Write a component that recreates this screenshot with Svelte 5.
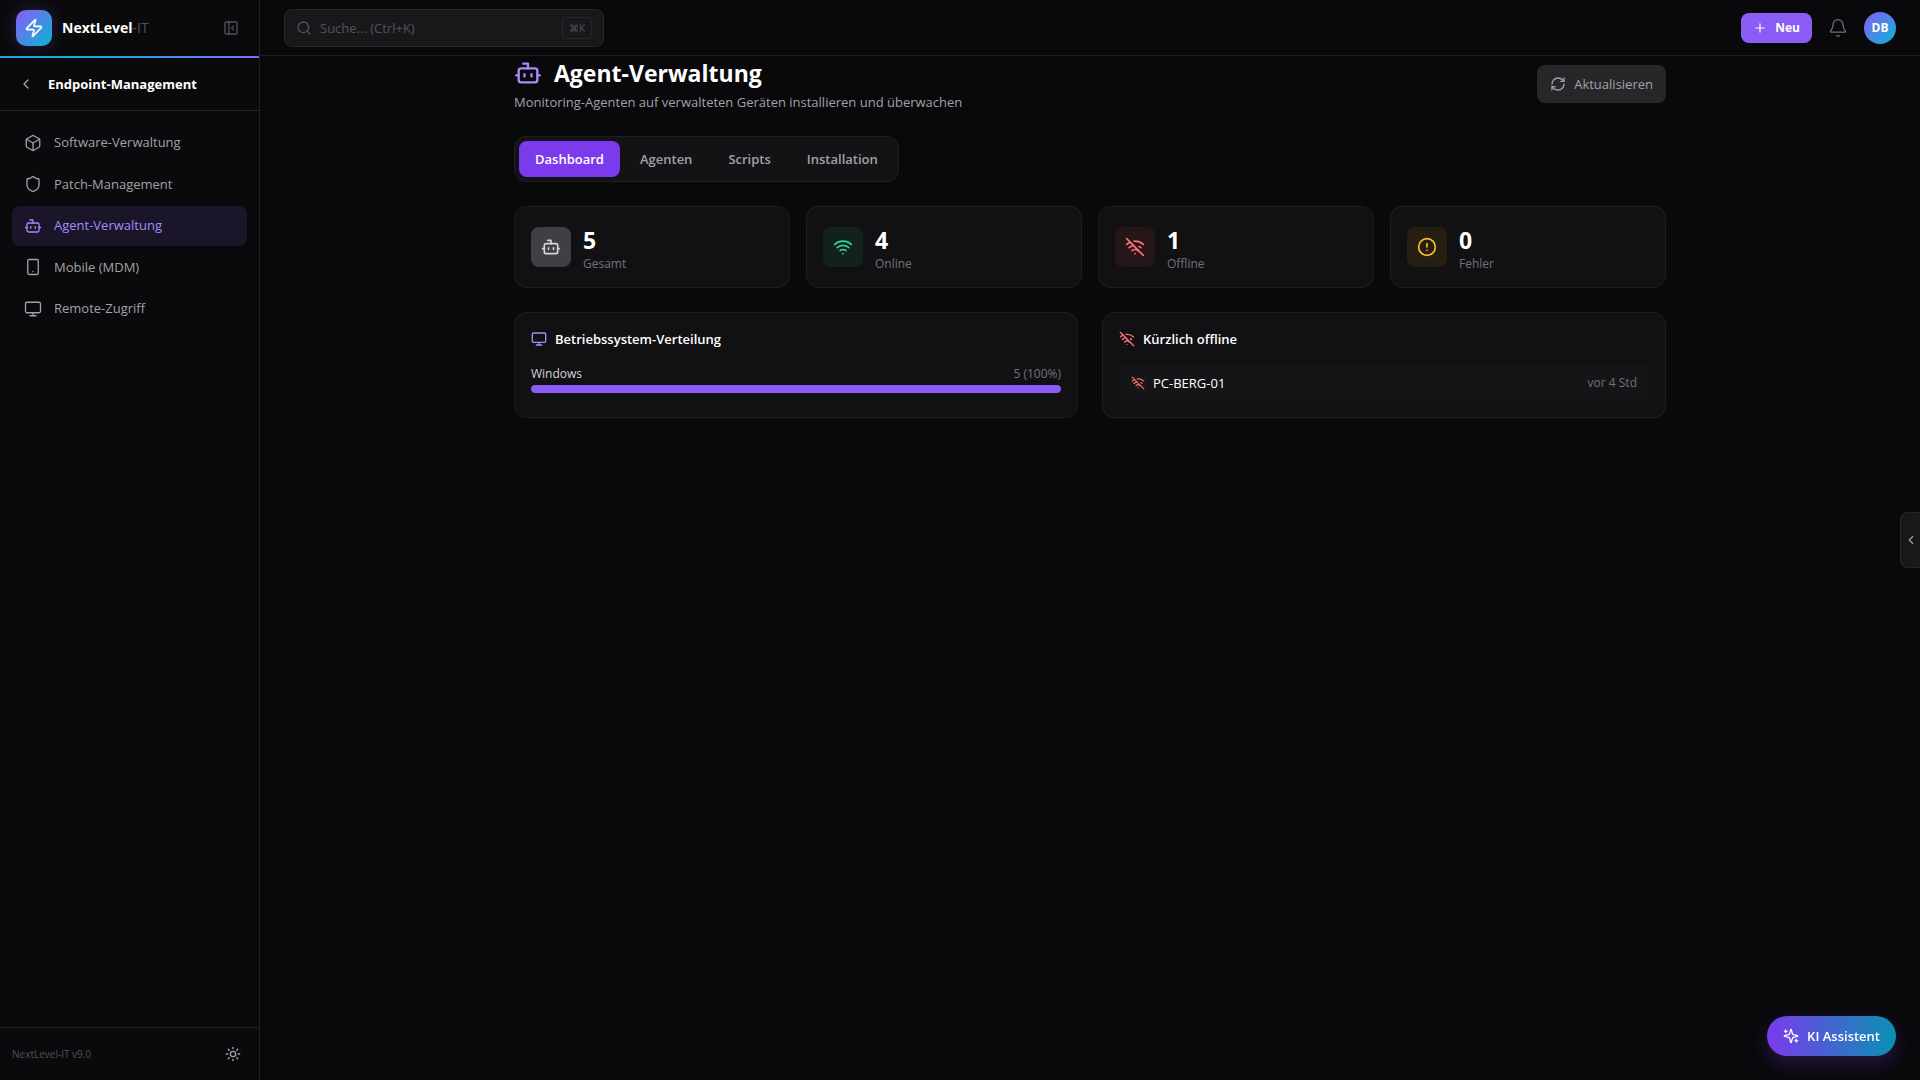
<script lang="ts">
  type IconName = keyof typeof icons;

  const icons = {
    zap: '<path d="M4 14a1 1 0 0 1-.78-1.63l9.9-10.2a.5.5 0 0 1 .86.46l-1.92 6.02A1 1 0 0 0 13 10h7a1 1 0 0 1 .78 1.63l-9.9 10.2a.5.5 0 0 1-.86-.46l1.92-6.02A1 1 0 0 0 11 14z"/>',
    panel: '<rect width="18" height="18" x="3" y="3" rx="2"/><path d="M9 3v18"/><path d="m16 15-3-3 3-3"/>',
    chevron: '<path d="m15 18-6-6 6-6"/>',
    box: '<path d="M21 8a2 2 0 0 0-1-1.73l-7-4a2 2 0 0 0-2 0l-7 4A2 2 0 0 0 3 8v8a2 2 0 0 0 1 1.73l7 4a2 2 0 0 0 2 0l7-4A2 2 0 0 0 21 16Z"/><path d="m3.3 7 8.7 5 8.7-5"/><path d="M12 22V12"/>',
    shield: '<path d="M20 13c0 5-3.5 7.5-7.66 8.95a1 1 0 0 1-.67-.01C7.5 20.5 4 18 4 13V6a1 1 0 0 1 1-1c2 0 4.5-1.2 6.24-2.72a1.17 1.17 0 0 1 1.52 0C14.51 3.81 17 5 19 5a1 1 0 0 1 1 1z"/>',
    bot: '<path d="M12 8V4H8"/><rect width="16" height="12" x="4" y="8" rx="2"/><path d="M2 14h2"/><path d="M20 14h2"/><path d="M15 13v2"/><path d="M9 13v2"/>',
    phone: '<rect width="14" height="20" x="5" y="2" rx="2"/><path d="M12 18h.01"/>',
    monitor: '<rect width="20" height="14" x="2" y="3" rx="2"/><path d="M8 21h8"/><path d="M12 17v4"/>',
    search: '<circle cx="11" cy="11" r="8"/><path d="m21 21-4.3-4.3"/>',
    plus: '<path d="M5 12h14"/><path d="M12 5v14"/>',
    bell: '<path d="M10.268 21a2 2 0 0 0 3.464 0"/><path d="M3.262 15.326A1 1 0 0 0 4 17h16a1 1 0 0 0 .74-1.673C19.41 13.956 18 12.499 18 8A6 6 0 0 0 6 8c0 4.499-1.411 5.956-2.738 7.326"/>',
    refresh: '<path d="M3 12a9 9 0 0 1 9-9 9.75 9.75 0 0 1 6.74 2.74L21 8"/><path d="M21 3v5h-5"/><path d="M21 12a9 9 0 0 1-9 9 9.75 9.75 0 0 1-6.74-2.74L3 16"/><path d="M8 16H3v5"/>',
    wifi: '<path d="M12 20h.01"/><path d="M2 8.82a15 15 0 0 1 20 0"/><path d="M5 12.859a10 10 0 0 1 14 0"/><path d="M8.5 16.429a5 5 0 0 1 7 0"/>',
    wifiOff: '<path d="M12 20h.01"/><path d="M8.5 16.429a5 5 0 0 1 7 0"/><path d="M5 12.859a10 10 0 0 1 5.17-2.69"/><path d="M19 12.859a10 10 0 0 0-2.007-1.523"/><path d="M2 8.82a15 15 0 0 1 4.177-2.643"/><path d="M22 8.82a15 15 0 0 0-11.288-3.764"/><path d="m2 2 20 20"/>',
    alert: '<circle cx="12" cy="12" r="10"/><path d="M12 8v4"/><path d="M12 16h.01"/>',
    sparkles: '<path d="M9.937 15.5A2 2 0 0 0 8.5 14.063l-6.135-1.582a.5.5 0 0 1 0-.962L8.5 9.936A2 2 0 0 0 9.937 8.5l1.582-6.135a.5.5 0 0 1 .963 0L14.063 8.5A2 2 0 0 0 15.5 9.937l6.135 1.581a.5.5 0 0 1 0 .964L15.5 14.063a2 2 0 0 0-1.437 1.437l-1.582 6.135a.5.5 0 0 1-.963 0z"/><path d="M4 3v4"/><path d="M6 5H2"/><path d="M20 17v4"/><path d="M22 19h-4"/>',
    sun: '<circle cx="12" cy="12" r="4"/><path d="M12 2v2"/><path d="M12 20v2"/><path d="m4.93 4.93 1.41 1.41"/><path d="m17.66 17.66 1.41 1.41"/><path d="M2 12h2"/><path d="M20 12h2"/><path d="m6.34 17.66-1.41 1.41"/><path d="m19.07 4.93-1.41 1.41"/>',
  };

  const navItems: { label: string; icon: IconName }[] = [
    { label: 'Software-Verwaltung', icon: 'box' },
    { label: 'Patch-Management', icon: 'shield' },
    { label: 'Agent-Verwaltung', icon: 'bot' },
    { label: 'Mobile (MDM)', icon: 'phone' },
    { label: 'Remote-Zugriff', icon: 'monitor' },
  ];

  const tabs = ['Dashboard', 'Agenten', 'Scripts', 'Installation'];

  const stats: { label: string; value: number; icon: IconName; tone: string }[] = [
    { label: 'Gesamt', value: 5, icon: 'bot', tone: 'neutral' },
    { label: 'Online', value: 4, icon: 'wifi', tone: 'green' },
    { label: 'Offline', value: 1, icon: 'wifiOff', tone: 'red' },
    { label: 'Fehler', value: 0, icon: 'alert', tone: 'amber' },
  ];

  const systems = [{ name: 'Windows', count: 5 }];
  const offline = [{ name: 'PC-BERG-01', since: 'vor 4 Std' }];

  let activeNav = $state('Agent-Verwaltung');
  let activeTab = $state('Dashboard');
  let query = $state('');

  const total = systems.reduce((sum, s) => sum + s.count, 0);
  const share = (count: number) => Math.round((count / total) * 100);
</script>

{#snippet icon(name: IconName, size: number, stroke = 2)}
  <svg
    width={size}
    height={size}
    viewBox="0 0 24 24"
    fill="none"
    stroke="currentColor"
    stroke-width={stroke}
    stroke-linecap="round"
    stroke-linejoin="round"
    aria-hidden="true"
  >
    {@html icons[name]}
  </svg>
{/snippet}

<div class="shell">
  <aside class="sidebar">
    <div class="brand">
      <span class="logo">{@render icon('zap', 20)}</span>
      <span class="brand-name">NextLevel<span class="brand-suffix">-IT</span></span>
      <button class="icon-btn collapse" aria-label="Seitenleiste einklappen">{@render icon('panel', 16)}</button>
    </div>
    <div class="accent-line"></div>
    <div class="section">
      <button class="icon-btn back" aria-label="Zurück">{@render icon('chevron', 16)}</button>
      <span>Endpoint-Management</span>
    </div>
    <nav>
      {#each navItems as item}
        <a
          href="#{item.icon}"
          class:active={item.label === activeNav}
          onclick={() => (activeNav = item.label)}
        >
          {@render icon(item.icon, 18, 1.75)}
          <span>{item.label}</span>
        </a>
      {/each}
    </nav>
    <div class="sidebar-footer">
      <span>NextLevel-IT v9.0</span>
      <button class="icon-btn theme" aria-label="Design wechseln">{@render icon('sun', 16)}</button>
    </div>
  </aside>

  <div class="page">
    <header class="topbar">
      <label class="search">
        {@render icon('search', 16)}
        <input type="text" placeholder="Suche... (Ctrl+K)" aria-label="Suche" bind:value={query} />
        <kbd>⌘K</kbd>
      </label>
      <div class="actions">
        <button class="new-btn">{@render icon('plus', 14)}Neu</button>
        <button class="icon-btn bell" aria-label="Benachrichtigungen">{@render icon('bell', 20, 1.5)}</button>
        <button class="avatar">DB</button>
      </div>
    </header>

    <main>
      <div class="page-head">
        <div>
          <h1>{@render icon('bot', 28)}Agent-Verwaltung</h1>
          <p>Monitoring-Agenten auf verwalteten Geräten installieren und überwachen</p>
        </div>
        <button class="refresh">{@render icon('refresh', 16)}Aktualisieren</button>
      </div>

      <div class="tabs" role="tablist">
        {#each tabs as tab}
          <button
            role="tab"
            aria-selected={tab === activeTab}
            class:active={tab === activeTab}
            onclick={() => (activeTab = tab)}>{tab}</button
          >
        {/each}
      </div>

      <section class="stats">
        {#each stats as stat}
          <div class="card stat">
            <span class="stat-icon {stat.tone}">{@render icon(stat.icon, 20)}</span>
            <div>
              <div class="stat-value">{stat.value}</div>
              <div class="stat-label">{stat.label}</div>
            </div>
          </div>
        {/each}
      </section>

      <section class="panels">
        <div class="card panel">
          <h2><span class="violet">{@render icon('monitor', 16)}</span>Betriebssystem-Verteilung</h2>
          {#each systems as system}
            <div class="usage">
              <div class="usage-row">
                <span>{system.name}</span>
                <span class="muted">{system.count} ({share(system.count)}%)</span>
              </div>
              <div class="bar"><div class="bar-fill" style="width: {share(system.count)}%"></div></div>
            </div>
          {/each}
        </div>
        <div class="card panel">
          <h2><span class="coral">{@render icon('wifiOff', 16)}</span>Kürzlich offline</h2>
          {#each offline as device}
            <div class="device">
              <span class="coral">{@render icon('wifiOff', 14)}</span>
              <span>{device.name}</span>
              <span class="muted since">{device.since}</span>
            </div>
          {/each}
        </div>
      </section>
    </main>
  </div>

  <button class="drawer-handle" aria-label="Seitenbereich öffnen">{@render icon('chevron', 14)}</button>
  <button class="assistant">{@render icon('sparkles', 16)}KI Assistent</button>
</div>

<style>
  :global(body) {
    margin: 0;
    background: #09090b;
  }
  .shell {
    display: flex;
    min-height: 100vh;
    background: #09090b;
    color: #fafafa;
    font-family: 'Segoe UI', 'Open Sans', 'Noto Sans', sans-serif;
    font-size: 14px;
    line-height: 20px;
  }
  .shell :global(svg) {
    display: block;
    flex: none;
  }
  button,
  input {
    font: inherit;
    border: 0;
    padding: 0;
    background: none;
    color: inherit;
  }
  button {
    display: flex;
    align-items: center;
    justify-content: center;
    cursor: pointer;
  }
  .icon-btn {
    width: 28px;
    height: 28px;
    border-radius: 6px;
  }

  /* Sidebar */
  .sidebar {
    position: sticky;
    top: 0;
    box-sizing: border-box;
    flex: none;
    display: flex;
    flex-direction: column;
    width: 260px;
    height: 100vh;
    border-right: 1px solid #1f1f22;
    background: #0a0a0c;
  }
  .brand {
    display: flex;
    align-items: center;
    gap: 10px;
    height: 56px;
    padding: 0 14px 0 16px;
  }
  .logo {
    display: grid;
    place-items: center;
    width: 36px;
    height: 36px;
    border-radius: 10px;
    background: linear-gradient(135deg, #8b5cf6, #06b6d4);
    box-shadow: 0 0 16px rgba(139, 92, 246, 0.25);
    color: #fff;
  }
  .brand-name {
    font-size: 14px;
    font-weight: 700;
    color: #fff;
  }
  .brand-suffix {
    font-weight: 400;
    color: #52525b;
  }
  .collapse {
    margin-left: auto;
    color: #52525b;
  }
  .accent-line {
    height: 2px;
    background: linear-gradient(90deg, #24a1de, #06b6d4 28%, #7c6cf6);
  }
  .section {
    display: flex;
    align-items: center;
    gap: 8px;
    height: 52px;
    padding: 0 12px;
    border-bottom: 1px solid #27272a;
    font-size: 13px;
    font-weight: 700;
    color: #fff;
  }
  .back {
    color: #a1a1aa;
  }
  nav {
    display: flex;
    flex: 1;
    flex-direction: column;
    gap: 2px;
    padding: 12px;
  }
  nav a {
    display: flex;
    align-items: center;
    gap: 12px;
    padding: 10px 12px;
    border-radius: 8px;
    color: #a1a1aa;
    font-size: 13px;
    font-weight: 500;
    line-height: 1.5;
    text-decoration: none;
  }
  nav a.active {
    background: #1a1528;
    color: #a78bfa;
  }
  .sidebar-footer {
    display: flex;
    align-items: center;
    justify-content: space-between;
    height: 52px;
    padding: 0 12px;
    border-top: 1px solid #1f1f22;
    font-size: 10px;
    color: #52525b;
  }
  .theme {
    color: #a1a1aa;
  }

  /* Topbar */
  .page {
    flex: 1;
    min-width: 0;
  }
  .topbar {
    display: flex;
    align-items: center;
    justify-content: space-between;
    height: 55px;
    padding: 0 24px;
    border-bottom: 1px solid #1c1c1f;
  }
  .search {
    box-sizing: border-box;
    display: flex;
    align-items: center;
    gap: 8px;
    width: 320px;
    height: 38px;
    padding: 0 11px;
    border: 1px solid #27272a;
    border-radius: 8px;
    background: #18181b;
    color: #52525b;
  }
  .search input {
    flex: 1;
    min-width: 0;
    outline: none;
    font-size: 13px;
    color: #fafafa;
  }
  .search input::placeholder {
    color: #52525b;
    opacity: 1;
  }
  kbd {
    padding: 0 6px;
    border: 1px solid #27272a;
    border-radius: 4px;
    font-family: inherit;
    font-size: 10px;
    line-height: 20px;
  }
  .actions {
    display: flex;
    align-items: center;
    gap: 12px;
  }
  .new-btn {
    gap: 8px;
    height: 30px;
    padding: 0 12px;
    border-radius: 8px;
    background: #8b5cf6;
    color: #fff;
    font-size: 12px;
    font-weight: 700;
  }
  .bell {
    color: #71717a;
  }
  .avatar {
    width: 32px;
    height: 32px;
    border-radius: 50%;
    background: linear-gradient(135deg, #8b5cf6, #06b6d4);
    color: #fff;
    font-size: 12px;
    font-weight: 700;
  }

  /* Content */
  main {
    box-sizing: border-box;
    max-width: 1200px;
    margin: 0 auto;
    padding: 0 24px 24px;
  }
  .page-head {
    display: flex;
    align-items: center;
    justify-content: space-between;
    margin-bottom: 24px;
  }
  h1 {
    display: flex;
    align-items: center;
    gap: 12px;
    margin: 0;
    color: #fff;
    font-size: 23px;
    font-weight: 700;
    line-height: 34px;
  }
  h1 :global(svg) {
    color: #a78bfa;
  }
  .page-head p {
    margin: 2px 0 0;
    color: #a1a1aa;
    font-size: 13px;
    line-height: 20px;
  }
  .refresh {
    gap: 8px;
    height: 38px;
    padding: 0 13px;
    border-radius: 8px;
    background: #27272a;
    color: #a1a1aa;
    font-size: 13px;
  }
  .tabs {
    display: flex;
    gap: 4px;
    width: fit-content;
    padding: 4px;
    border: 1px solid #1f1f22;
    border-radius: 12px;
    background: #131315;
    margin-bottom: 24px;
  }
  .tabs button {
    height: 36px;
    padding: 0 16px;
    border-radius: 8px;
    color: #a1a1aa;
    font-size: 13px;
    font-weight: 600;
  }
  .tabs button.active {
    background: #7c3aed;
    color: #fff;
  }
  .card {
    padding: 16px;
    border: 1px solid #1e1e21;
    border-radius: 12px;
    background: #111113;
  }
  .stats {
    display: grid;
    grid-template-columns: repeat(4, 1fr);
    gap: 16px;
    margin-bottom: 24px;
  }
  .stat {
    display: flex;
    align-items: center;
    gap: 12px;
  }
  .stat-icon {
    display: grid;
    place-items: center;
    width: 40px;
    height: 40px;
    border-radius: 8px;
  }
  .neutral {
    background: #3f3f46;
    color: #d4d4d8;
  }
  .green {
    background: #11211d;
    color: #34d399;
  }
  .red {
    background: #271618;
    color: #f87171;
  }
  .amber {
    background: #271e12;
    color: #fbbf24;
  }
  .stat-value {
    color: #fff;
    font-size: 23px;
    font-weight: 700;
    line-height: 34px;
  }
  .stat-label {
    color: #71717a;
    font-size: 12px;
    line-height: 14px;
  }
  .panels {
    display: grid;
    grid-template-columns: repeat(2, 1fr);
    gap: 24px;
  }
  h2 {
    display: flex;
    align-items: center;
    gap: 8px;
    margin: 0 0 16px;
    color: #fff;
    font-size: 13px;
    font-weight: 600;
    line-height: 20px;
  }
  .violet {
    color: #a78bfa;
  }
  .coral {
    color: #f87171;
  }
  .muted {
    color: #71717a;
  }
  .usage-row {
    display: flex;
    justify-content: space-between;
    margin-bottom: 2px;
    color: #d4d4d8;
    font-size: 12px;
    line-height: 18px;
  }
  .usage-row .muted {
    color: #71717a;
  }
  .bar {
    height: 8px;
    border-radius: 4px;
    background: #27272a;
    overflow: hidden;
  }
  .bar-fill {
    height: 100%;
    border-radius: 4px;
    background: #8b5cf6;
  }
  .device {
    display: flex;
    align-items: center;
    gap: 8px;
    padding: 8px 12px;
    border-radius: 8px;
    background: #151517;
    color: #fff;
    font-size: 13px;
  }
  .since {
    margin-left: auto;
    font-size: 12px;
  }

  /* Floating controls */
  .drawer-handle {
    position: fixed;
    top: calc(50% - 28px);
    right: 0;
    box-sizing: border-box;
    width: 20px;
    height: 56px;
    border: 1px solid #27272a;
    border-right: 0;
    border-radius: 8px 0 0 8px;
    background: #18181b;
    color: #a1a1aa;
  }
  .assistant {
    position: fixed;
    right: 24px;
    bottom: 24px;
    gap: 8px;
    height: 40px;
    padding: 0 16px;
    border-radius: 20px;
    background: linear-gradient(90deg, #7c3aed, #0891b2);
    box-shadow: 0 8px 20px rgba(124, 58, 237, 0.25);
    color: #fff;
    font-size: 13px;
    font-weight: 600;
  }
</style>
